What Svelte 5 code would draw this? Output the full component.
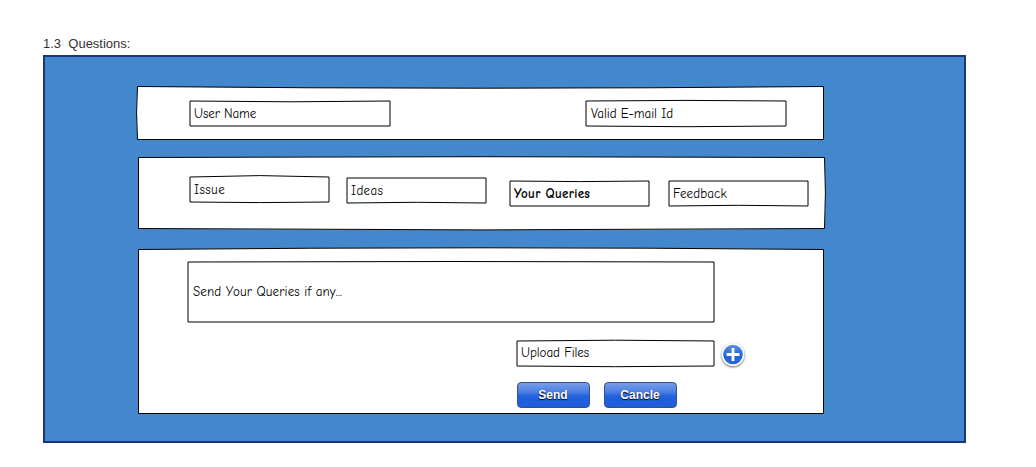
<script>
  // Each side bends outwards by the given amount: top, right, bottom, left.
  function outline(w, h, [t, r, b, l], inset) {
    const a = inset, x = w - inset, y = h - inset;
    return `M${a} ${a}Q${w / 2} ${a - 2 * t} ${x} ${a}Q${x + 2 * r} ${h / 2} ${x} ${y}Q${w / 2} ${y + 2 * b} ${a} ${y}Q${a - 2 * l} ${h / 2} ${a} ${a}Z`;
  }
</script>

{#snippet frame(w, h, bend, inset = 0)}
  <svg class="frame" width={w} height={h} aria-hidden="true">
    <path d={outline(w, h, bend, inset)} />
  </svg>
{/snippet}

{#snippet field(name, label, w, h, bend)}
  <div class="field {name}">
    {@render frame(w, h, bend)}
    <span>{label}</span>
  </div>
{/snippet}

<main>
  <h1>1.3&nbsp; Questions:</h1>
  <div class="board">
    <section class="card person">
      {@render frame(687, 54, [-1.7, 0, 0, 0.9], 0.5)}
      {@render field('user', 'User Name', 200, 25, [-0.8, 0, 0, 0])}
      {@render field('email', 'Valid E-mail Id', 200, 25, [0.6, 0, 0.7, 0])}
    </section>
    <section class="card topics">
      {@render frame(687, 72, [0.8, 0.9, 1.4, 0], 0.5)}
      {@render field('issue', 'Issue', 139, 25, [1.4, 0, 0.6, 0])}
      {@render field('ideas', 'Ideas', 139, 25, [0, 0, -0.7, 0])}
      {@render field('queries', 'Your Queries', 139, 25, [-0.6, 0, 0, 0])}
      {@render field('feedback', 'Feedback', 139, 25, [0, 0, -0.7, 0])}
    </section>
    <section class="card message">
      {@render frame(686, 165, [1.7, 0, 0, 0], 0.5)}
      {@render field('body', 'Send Your Queries if any...', 526, 60, [0.5, 0, 0, 0])}
      <div class="upload-row">
        {@render field('upload', 'Upload Files', 197, 25, [0.8, 0, 0.7, 0])}
        <button class="add" aria-label="Add">
          <svg width="28" height="28" viewBox="0 0 28 28">
            <defs>
              <linearGradient id="disc" x1="0" y1="0" x2="0" y2="1">
                <stop offset="0" stop-color="#5b91e6" />
                <stop offset="0.55" stop-color="#2264d8" />
                <stop offset="1" stop-color="#2769dc" />
              </linearGradient>
            </defs>
            <circle class="rim" cx="14" cy="13.5" r="11.5" />
            <circle cx="14" cy="13.5" r="9.8" fill="url(#disc)" />
            <path d="M14 7v13M7.5 13.5h13" stroke="#fff" stroke-width="2.8" />
          </svg>
        </button>
      </div>
      <div class="actions">
        <button class="action">Send</button>
        <button class="action">Cancle</button>
      </div>
    </section>
  </div>
</main>

<style>
  :global(body) { margin: 0; background: #fff; }
  main {
    box-sizing: border-box;
    height: 467px;
    padding: 36px 0 0 43px;
    font-family: "Liberation Sans", Arial, sans-serif;
  }
  h1 {
    margin: 0;
    height: 19px;
    font-size: 13px;
    font-weight: 400;
    line-height: 15px;
    color: #333;
    white-space: pre;
  }
  .board {
    box-sizing: border-box;
    width: 923px;
    height: 388px;
    padding: 29px 0 0 93px;
    border: 2px solid #1b3380;
    background: #4388cc;
  }
  .card { isolation: isolate; position: relative; box-sizing: border-box; display: flex; align-items: flex-start; }
  .person { width: 687px; height: 54px; margin-left: -1px; padding: 15px 0 0 53px; gap: 196px; }
  .topics { width: 687px; height: 72px; margin-top: 17px; padding: 20px 0 0 52px; }
  .message { width: 686px; height: 165px; margin-top: 20px; padding: 13px 0 0 50px; flex-direction: column; }
  .frame { position: absolute; z-index: -1; top: 0; left: 0; display: block; overflow: visible; }
  .frame path { fill: #fff; stroke: #000; stroke-width: 1; stroke-linejoin: round; }
  .field {
    isolation: isolate;
    position: relative;
    flex: none;
    width: 139px;
    height: 25px;
    box-sizing: border-box;
    padding-left: 4px;
    font-family: "Comic Neue", "Comic Sans MS", Lato, sans-serif;
    font-size: 13px;
    line-height: 25px;
    color: #000;
    white-space: nowrap;
  }
  .user, .email { width: 200px; }
  .user { letter-spacing: -0.08px; }
  .email { padding-left: 5px; letter-spacing: -0.02px; }
  .issue { letter-spacing: 0.4px; }
  .ideas { margin: 1px 0 0 18px; letter-spacing: 0.3px; }
  .queries { margin: 4px 0 0 24px; font-weight: 700; letter-spacing: 0.3px; }
  .feedback { margin: 4px 0 0 20px; letter-spacing: 0.13px; }
  .body { width: 526px; height: 60px; line-height: 60px; padding-left: 5px; letter-spacing: 0.14px; }
  .upload-row { display: flex; margin: 19px 0 0 329px; height: 25px; }
  .upload { width: 197px; line-height: 24px; letter-spacing: -0.05px; }
  button { border: 0; padding: 0; font-family: inherit; }
  .add { width: 28px; height: 28px; margin: 0 0 0 5px; background: none; }
  .add svg { display: block; overflow: visible; }
  .rim { fill: #fff; filter: drop-shadow(0 1px 1.3px rgb(0 0 0 / 60%)); }
  .actions { display: flex; gap: 14px; margin: 16px 0 0 329px; }
  .action {
    box-sizing: border-box;
    width: 73px;
    height: 26px;
    border: 1px solid #365185;
    border-radius: 4px;
    background: linear-gradient(#799ee9, #4b7de3 38%, #2260dd 55%, #1f5ddd);
    color: #fff;
    font-size: 12px;
    font-weight: 700;
    line-height: 24px;
    padding-right: 1px;
    text-shadow: 0 1px 1px #000;
  }
</style>
